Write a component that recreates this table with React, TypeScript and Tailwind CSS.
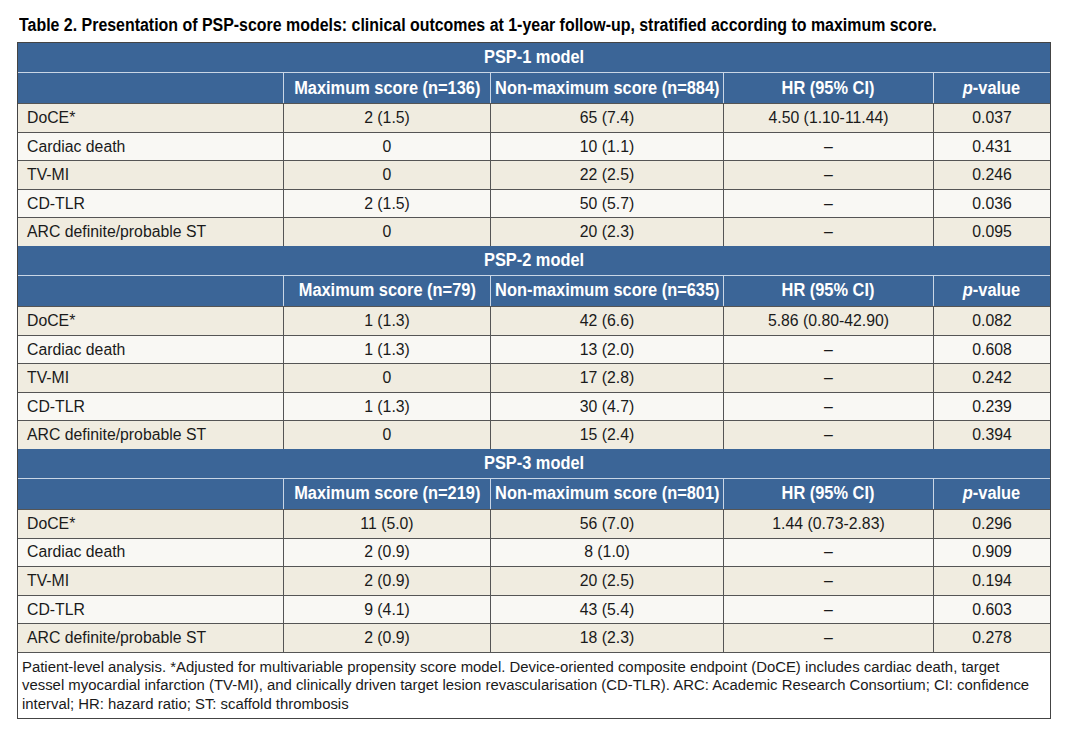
import React from 'react'

interface Row {
  label: string
  max: string
  non: string
  hr: string
  p: string
}

interface Model {
  name: string
  maxN: number
  nonN: number
  rows: Row[]
}

const models: Model[] = [
  {
    name: 'PSP-1 model',
    maxN: 136,
    nonN: 884,
    rows: [
      { label: 'DoCE*', max: '2 (1.5)', non: '65 (7.4)', hr: '4.50 (1.10-11.44)', p: '0.037' },
      { label: 'Cardiac death', max: '0', non: '10 (1.1)', hr: '–', p: '0.431' },
      { label: 'TV-MI', max: '0', non: '22 (2.5)', hr: '–', p: '0.246' },
      { label: 'CD-TLR', max: '2 (1.5)', non: '50 (5.7)', hr: '–', p: '0.036' },
      { label: 'ARC definite/probable ST', max: '0', non: '20 (2.3)', hr: '–', p: '0.095' },
    ],
  },
  {
    name: 'PSP-2 model',
    maxN: 79,
    nonN: 635,
    rows: [
      { label: 'DoCE*', max: '1 (1.3)', non: '42 (6.6)', hr: '5.86 (0.80-42.90)', p: '0.082' },
      { label: 'Cardiac death', max: '1 (1.3)', non: '13 (2.0)', hr: '–', p: '0.608' },
      { label: 'TV-MI', max: '0', non: '17 (2.8)', hr: '–', p: '0.242' },
      { label: 'CD-TLR', max: '1 (1.3)', non: '30 (4.7)', hr: '–', p: '0.239' },
      { label: 'ARC definite/probable ST', max: '0', non: '15 (2.4)', hr: '–', p: '0.394' },
    ],
  },
  {
    name: 'PSP-3 model',
    maxN: 219,
    nonN: 801,
    rows: [
      { label: 'DoCE*', max: '11 (5.0)', non: '56 (7.0)', hr: '1.44 (0.73-2.83)', p: '0.296' },
      { label: 'Cardiac death', max: '2 (0.9)', non: '8 (1.0)', hr: '–', p: '0.909' },
      { label: 'TV-MI', max: '2 (0.9)', non: '20 (2.5)', hr: '–', p: '0.194' },
      { label: 'CD-TLR', max: '9 (4.1)', non: '43 (5.4)', hr: '–', p: '0.603' },
      { label: 'ARC definite/probable ST', max: '2 (0.9)', non: '18 (2.3)', hr: '–', p: '0.278' },
    ],
  },
]

// ancho de columnas tomado de la captura
const cols = 'grid grid-cols-[266px_207px_233px_210px_116px]'

// texto "condensado": Arial bold estrechado, no hay fuente narrow instalada
const Narrow: React.FC<{ children: React.ReactNode; className?: string }> = ({
  children,
  className = 'scale-x-[0.91]',
}) => <span className={`inline-block whitespace-nowrap ${className}`}>{children}</span>

const Section: React.FC<{ model: Model }> = ({ model }) => (
  <div>
    <div className="h-[30px] bg-[#3b6597] border-b border-[#c9d6e6] flex items-center justify-center text-white font-bold text-[18px]">
      <Narrow>{model.name}</Narrow>
    </div>
    <div className={`${cols} h-[30px] bg-[#3b6597] text-white font-bold text-[18px]`}>
      <div className="border-r border-[#c9d6e6]" />
      <div className="border-r border-[#c9d6e6] flex items-center justify-center">
        <Narrow>Maximum score (n={model.maxN})</Narrow>
      </div>
      <div className="border-r border-[#c9d6e6] flex items-center justify-center">
        <Narrow>Non-maximum score (n={model.nonN})</Narrow>
      </div>
      <div className="border-r border-[#c9d6e6] flex items-center justify-center">
        <Narrow>HR (95% CI)</Narrow>
      </div>
      <div className="flex items-center justify-center">
        <Narrow>
          <span className="italic">p</span>-value
        </Narrow>
      </div>
    </div>
    {model.rows.map((r, i) => (
      <div
        key={r.label}
        className={`${cols} h-[28.6px] border-t border-[#555] text-[15.8px] text-[#1a1a1a] ${
          i % 2 === 0 ? 'bg-[#f0ece0]' : 'bg-[#f9f8f4]'
        }`}
      >
        <div className="border-r border-[#555] flex items-center pl-[9px]">{r.label}</div>
        <div className="border-r border-[#555] flex items-center justify-center">{r.max}</div>
        <div className="border-r border-[#555] flex items-center justify-center">{r.non}</div>
        <div className="border-r border-[#555] flex items-center justify-center">{r.hr}</div>
        <div className="flex items-center justify-center">{r.p}</div>
      </div>
    ))}
  </div>
)

export default function App() {
  return (
    <div className="w-[1071px] h-[732px] bg-white pl-[17px] pt-[14px] [font-family:'Liberation_Sans',Arial,sans-serif]">
      <h1 className="text-[18px] font-bold text-black leading-[22px] pl-[2px]">
        <Narrow className="origin-left scale-x-[0.885]">
          Table 2. Presentation of PSP-score models: clinical outcomes at 1-year follow-up, stratified according to maximum score.
        </Narrow>
      </h1>
      <div className="mt-[6px] w-[1034px] border border-[#444]">
        {models.map(m => (
          <Section key={m.name} model={m} />
        ))}
        <div className="border-t border-[#555] bg-white px-[4px] pt-[5px] pb-[5px] text-[14.9px] leading-[18.5px] text-[#1a1a1a] whitespace-nowrap">
          Patient-level analysis. *Adjusted for multivariable propensity score model. Device-oriented composite endpoint (DoCE) includes cardiac death, target
          <br />
          vessel myocardial infarction (TV-MI), and clinically driven target lesion revascularisation (CD-TLR). ARC: Academic Research Consortium; CI: confidence
          <br />
          interval; HR: hazard ratio; ST: scaffold thrombosis
        </div>
      </div>
    </div>
  )
}
